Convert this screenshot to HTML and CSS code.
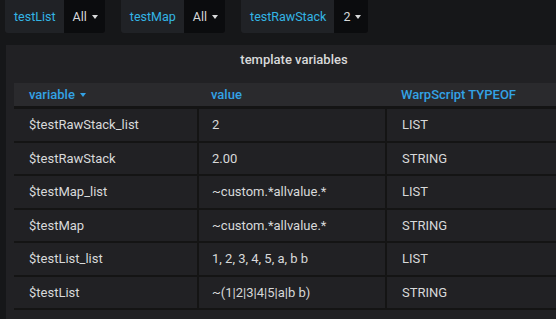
FILE: index.html
```html
<!DOCTYPE html>
<html lang="en">
<head>
    <meta charset="UTF-8">
    <title>Template variables</title>
    <link rel="stylesheet" href="styles.css">
</head>
<body>
    <div class="submenu">
        <div class="var-item">
            <span class="var-label">testList</span>
            <span class="var-picker">All <span class="caret"></span></span>
        </div>
        <div class="var-item">
            <span class="var-label">testMap</span>
            <span class="var-picker">All <span class="caret"></span></span>
        </div>
        <div class="var-item">
            <span class="var-label">testRawStack</span>
            <span class="var-picker">2 <span class="caret"></span></span>
        </div>
    </div>

    <div class="panel">
        <div class="panel-title">template variables</div>
        <table class="vars-table">
            <colgroup>
                <col class="col-name">
                <col class="col-value">
                <col class="col-type">
            </colgroup>
            <thead>
                <tr>
                    <th>variable <span class="caret caret-blue"></span></th>
                    <th>value</th>
                    <th>WarpScript TYPEOF</th>
                </tr>
            </thead>
            <tbody>
                <tr><td>$testRawStack_list</td><td>2</td><td>LIST</td></tr>
                <tr><td>$testRawStack</td><td>2.00</td><td>STRING</td></tr>
                <tr><td>$testMap_list</td><td>~custom.*allvalue.*</td><td>LIST</td></tr>
                <tr><td>$testMap</td><td>~custom.*allvalue.*</td><td>STRING</td></tr>
                <tr><td>$testList_list</td><td>1, 2, 3, 4, 5, a, b b</td><td>LIST</td></tr>
                <tr><td>$testList</td><td>~(1|2|3|4|5|a|b b)</td><td>STRING</td></tr>
            </tbody>
        </table>
    </div>
</body>
</html>
```

FILE: styles.css
```css
:root {
    --page-bg: #161719;
    --panel-bg: #212124;
    --label-bg: #202226;
    --input-bg: #0b0c0e;
    --line: #141414;
    --text: #d8d9da;
    --label-text: #33b5e5;
    --head-text: #33a2e5;
}

body {
    margin: 0;
    background-color: var(--page-bg);
    color: var(--text);
    font-family: Roboto, "Helvetica Neue", Arial, sans-serif;
    font-size: 13px;
    overflow: hidden;
}

.submenu {
    display: flex;
    gap: 16px;
    padding-left: 5px;
    font-size: 12.5px;
}

.var-item {
    display: flex;
    height: 33px;
}

.var-label {
    display: flex;
    align-items: center;
    padding: 0 8px 0 9px;
    background-color: var(--label-bg);
    color: var(--label-text);
    border-radius: 0 0 0 3px;
}

.var-picker {
    display: flex;
    align-items: center;
    gap: 5px;
    padding: 0 7px 0 9px;
    background-color: var(--input-bg);
    color: var(--text);
    border-radius: 0 0 3px 0;
}

.caret {
    display: inline-block;
    width: 0;
    height: 0;
    border-left: 3.5px solid transparent;
    border-right: 3.5px solid transparent;
    border-top: 4px solid var(--text);
}

.caret-blue {
    border-top-color: var(--head-text);
    margin-left: 2px;
    vertical-align: 2px;
}

.panel {
    width: 576px;
    margin: 12px 0 0 6px;
    padding: 0 8px 20px;
    box-sizing: border-box;
    background-color: var(--panel-bg);
}

.panel-title {
    text-align: center;
    font-weight: 500;
    line-height: 20px;
    padding: 5px 0 13px;
}

.vars-table {
    width: 560px;
    border-collapse: collapse;
    table-layout: fixed;
}

.col-name {
    width: 184px;
}

.col-value {
    width: 188px;
}

.vars-table th {
    text-align: left;
    font-weight: 500;
    color: var(--head-text);
    background-color: #2a2a2d;
    height: 23px;
    padding: 0 14px 0 15px;
    border-bottom: 3px solid var(--line);
}

.vars-table td {
    height: 31.5px;
    padding: 0 14px 0 15px;
    border-bottom: 2px solid var(--line);
    border-right: 2px solid var(--line);
}

.vars-table th:nth-child(2),
.vars-table td:nth-child(2) {
    padding-left: 13px;
}

.vars-table td:last-child {
    border-right: none;
}
```
